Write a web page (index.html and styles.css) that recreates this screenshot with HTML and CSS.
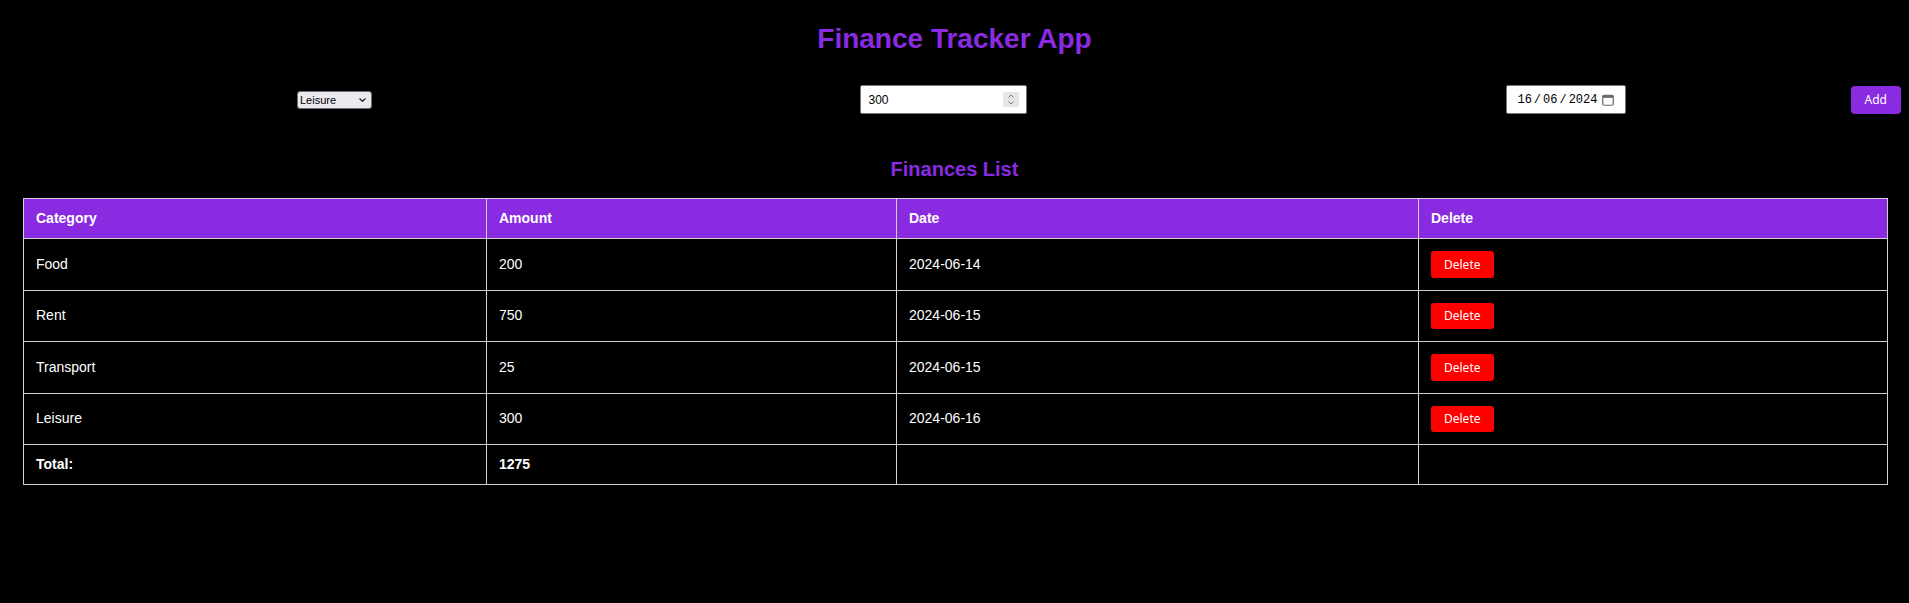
FILE: index.html
```html
<!DOCTYPE html>
<html lang="en">
<head>
<meta charset="utf-8">
<title>Finance Tracker App</title>
<link rel="stylesheet" href="styles.css">
</head>
<body>
<h1 class="title">Finance Tracker App</h1>
<form class="entry-form">
  <label class="select-box">
    <select class="select">
      <option>Food</option>
      <option>Rent</option>
      <option>Transport</option>
      <option selected>Leisure</option>
    </select>
    <svg class="chevron" width="7" height="4" viewBox="0 0 7 4"><polyline points="0.5,0.5 3.5,3.3 6.5,0.5" fill="none" stroke="#222" stroke-width="1.2"/></svg>
  </label>
  <div class="number-box">
    <input class="number-input" type="text" value="300">
    <span class="spinner">
      <svg width="16" height="15" viewBox="0 0 16 15"><polyline points="5.5,5.5 8,3 10.5,5.5" fill="none" stroke="#777" stroke-width="1"/><polyline points="5.5,9.5 8,12 10.5,9.5" fill="none" stroke="#777" stroke-width="1"/></svg>
    </span>
  </div>
  <div class="date-box">
    <span class="date-seg">16</span><span class="date-sep">/</span><span class="date-seg">06</span><span class="date-sep">/</span><span class="date-seg">2024</span>
    <svg class="cal-icon" width="12" height="12" viewBox="0 0 12 12"><rect x="0.75" y="1.25" width="10.5" height="10" rx="1.5" fill="none" stroke="#666" stroke-width="1.2"/><rect x="0.75" y="1.25" width="10.5" height="2.6" fill="#666"/></svg>
  </div>
  <button class="add-btn" type="button">Add</button>
</form>
<h2 class="subtitle">Finances List</h2>
<table class="finances">
  <colgroup>
    <col class="col-category">
    <col class="col-amount">
    <col class="col-date">
    <col class="col-delete">
  </colgroup>
  <thead>
    <tr><th>Category</th><th>Amount</th><th>Date</th><th>Delete</th></tr>
  </thead>
  <tbody>
    <tr><td>Food</td><td>200</td><td>2024-06-14</td><td><button class="delete-btn" type="button">Delete</button></td></tr>
    <tr><td>Rent</td><td>750</td><td>2024-06-15</td><td><button class="delete-btn" type="button">Delete</button></td></tr>
    <tr><td>Transport</td><td>25</td><td>2024-06-15</td><td><button class="delete-btn" type="button">Delete</button></td></tr>
    <tr><td>Leisure</td><td>300</td><td>2024-06-16</td><td><button class="delete-btn" type="button">Delete</button></td></tr>
  </tbody>
  <tfoot>
    <tr><td class="strong">Total:</td><td class="strong">1275</td><td></td><td></td></tr>
  </tfoot>
</table>
</body>
</html>
```
FILE: styles.css
```css
body {
  margin: 8px;
  background: #000;
  color: #fff;
  font-family: "Liberation Sans", Arial, sans-serif;
}

.title {
  margin: 15px 0 15px;
  font-size: 28px;
  line-height: 32px;
  font-weight: bold;
  text-align: center;
  color: #8a2be2;
}

.entry-form {
  display: flex;
  align-items: center;
  margin: 0;
  padding: 15px 0 15px 289px;
}

.select-box {
  display: inline-flex;
  align-items: center;
  box-sizing: border-box;
  width: 76px;
  height: 18px;
  padding: 0 5px 0 2px;
  border: 1px solid #6f6f78;
  border-radius: 3px;
  background: #e9e9ef;
}

.select {
  flex: 1;
  min-width: 0;
  height: 16px;
  padding: 0;
  border: none;
  background: transparent;
  -webkit-appearance: none;
  appearance: none;
  font-family: "Liberation Sans", Arial, sans-serif;
  font-size: 11px;
  color: #000;
  outline: none;
}

.chevron {
  flex: none;
  display: block;
}

.number-box {
  display: flex;
  align-items: center;
  box-sizing: border-box;
  width: 167px;
  height: 29px;
  margin-left: 488px;
  padding: 0 7px 0 7px;
  border: 1px solid #767676;
  border-radius: 2px;
  background: #fff;
}

.number-input {
  flex: 1;
  min-width: 0;
  padding: 0;
  border: none;
  outline: none;
  background: transparent;
  font-family: "Liberation Sans", Arial, sans-serif;
  font-size: 12px;
  color: #000;
}

.spinner {
  display: block;
  width: 16px;
  height: 15px;
  background: #e6e6e6;
}

.spinner svg {
  display: block;
}

.date-box {
  display: flex;
  align-items: center;
  box-sizing: border-box;
  width: 120px;
  height: 29px;
  margin-left: 479px;
  padding: 0 0 0 10px;
  border: 1px solid #767676;
  border-radius: 2px;
  background: #fff;
  font-family: "Liberation Mono", "Courier New", monospace;
  font-size: 12px;
  color: #000;
}

.date-sep {
  margin: 0 2px;
}

.cal-icon {
  display: block;
  margin-left: 5px;
}

.add-btn {
  margin-left: 225px;
  height: 28px;
  padding: 0 14px;
  border: none;
  border-radius: 4px;
  background: #8a2be2;
  color: #fff;
  font-family: "Noto Sans", "Liberation Sans", sans-serif;
  font-size: 12px;
  line-height: 16px;
}

.subtitle {
  margin: 29px 0 17px;
  font-size: 20px;
  line-height: 23px;
  font-weight: bold;
  text-align: center;
  color: #8a2be2;
}

.finances {
  width: calc(100% - 29px);
  margin-left: 15px;
  border-collapse: collapse;
  table-layout: fixed;
  font-size: 14px;
}

.col-category { width: 463px; }
.col-amount { width: 410px; }
.col-date { width: 522px; }
.col-delete { width: 469px; }

.finances th,
.finances td {
  padding: 12px;
  border: 1px solid #d0d0d0;
  text-align: left;
  line-height: 15px;
  vertical-align: middle;
}

.finances th {
  background: #8a2be2;
  color: #fff;
  font-weight: bold;
}

.finances .strong {
  font-weight: bold;
}

.delete-btn {
  display: block;
  height: 26.5px;
  padding: 0 13px;
  border: none;
  border-radius: 3px;
  background: #ff0000;
  color: #fff;
  font-family: "Noto Sans", "Liberation Sans", sans-serif;
  font-size: 12px;
  line-height: 15px;
}
```
